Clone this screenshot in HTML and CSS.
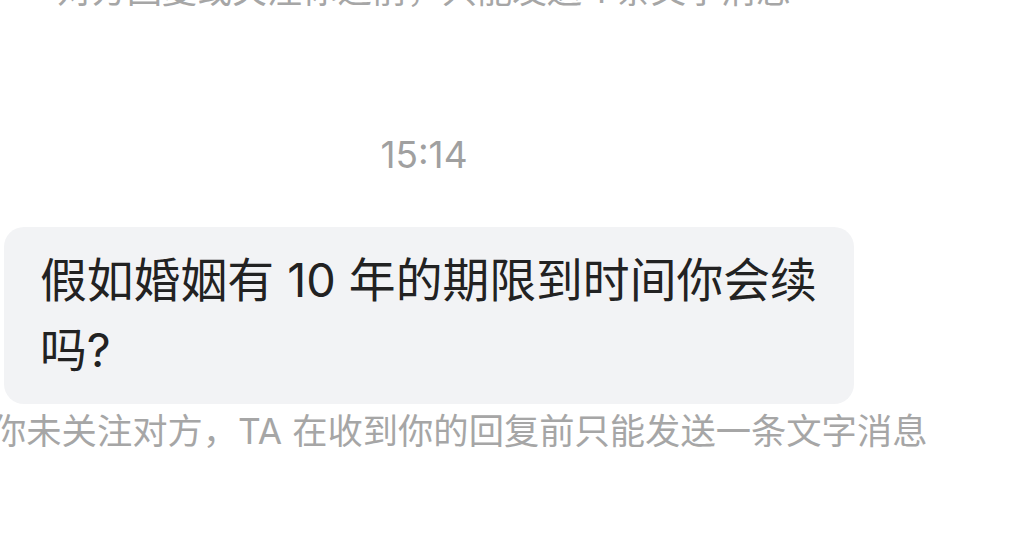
FILE: index.html
```html
<!DOCTYPE html>
<html lang="zh-CN">
<head>
    <meta charset="UTF-8">
    <meta name="viewport" content="width=device-width, initial-scale=1.0">
    <title>私信</title>
    <link rel="stylesheet" href="styles.css">
</head>
<body>
    <div class="chat">
        <p class="notice notice-top">对方回复或关注你之前，只能发送 1 条文字消息</p>
        <div class="time">15:14</div>
        <div class="bubble">假如婚姻有 10 年的期限到时间你会续吗?</div>
        <p class="notice notice-bottom">你未关注对方，TA 在收到你的回复前只能发送一条文字消息</p>
    </div>
</body>
</html>
```

FILE: styles.css
```css
body {
    margin: 0;
    background: #fff;
    font-family: "Inter", "Noto Sans CJK SC", sans-serif;
    overflow: hidden;
}

.chat {
    display: flex;
    flex-direction: column;
}

.notice {
    margin: 0;
    font-size: 35px;
    line-height: 50px;
    color: #a6a6a6;
    white-space: nowrap;
}

.notice-top {
    margin-top: -35px;
    width: 848px;
    text-align: center;
}

.time {
    margin-top: 115px;
    width: 848px;
    text-align: center;
    font-size: 37px;
    line-height: 50px;
    color: #a0a0a0;
}

.bubble {
    margin: 47px 0 0 4px;
    width: 850px;
    box-sizing: border-box;
    padding: 18px 28px 19px 36px;
    border-radius: 20px;
    background: #f2f3f5;
    color: #222;
    font-size: 46.8px;
    line-height: 70px;
}

.notice-bottom {
    margin-top: 3px;
    margin-left: -9px;
    font-size: 35.3px;
}
```
